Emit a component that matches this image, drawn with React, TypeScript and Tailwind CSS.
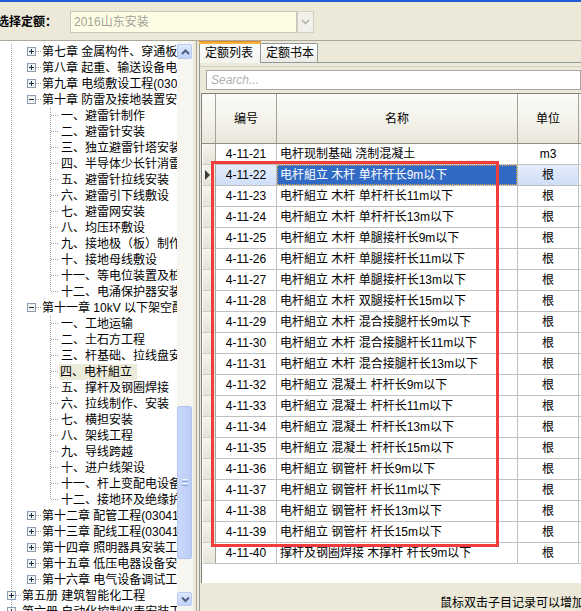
import React from "react";

type TreeItem = { t: string; lv: 0 | 1 | 2; box?: "+" | "-"; sel?: boolean; last?: boolean };

const tree: TreeItem[] = [
  { t: "第七章 金属构件、穿通板、接地", lv: 1, box: "+" },
  { t: "第八章 起重、输送设备电气", lv: 1, box: "+" },
  { t: "第九章 电缆敷设工程(030408)", lv: 1, box: "+" },
  { t: "第十章 防雷及接地装置安装", lv: 1, box: "-" },
  { t: "一、避雷针制作", lv: 2 },
  { t: "二、避雷针安装", lv: 2 },
  { t: "三、独立避雷针塔安装", lv: 2 },
  { t: "四、半导体少长针消雷装置", lv: 2 },
  { t: "五、避雷针拉线安装", lv: 2 },
  { t: "六、避雷引下线敷设", lv: 2 },
  { t: "七、避雷网安装", lv: 2 },
  { t: "八、均压环敷设", lv: 2 },
  { t: "九、接地极（板）制作", lv: 2 },
  { t: "十、接地母线敷设", lv: 2 },
  { t: "十一、等电位装置及桩", lv: 2 },
  { t: "十二、电涌保护器安装", lv: 2, last: true },
  { t: "第十一章 10kV 以下架空配电", lv: 1, box: "-" },
  { t: "一、工地运输", lv: 2 },
  { t: "二、土石方工程", lv: 2 },
  { t: "三、杆基础、拉线盘安装", lv: 2 },
  { t: "四、电杆組立", lv: 2, sel: true },
  { t: "五、撑杆及钢圈焊接", lv: 2 },
  { t: "六、拉线制作、安装", lv: 2 },
  { t: "七、横担安装", lv: 2 },
  { t: "八、架线工程", lv: 2 },
  { t: "九、导线跨越", lv: 2 },
  { t: "十、进户线架设", lv: 2 },
  { t: "十一、杆上变配电设备", lv: 2 },
  { t: "十二、接地环及绝缘护罩", lv: 2, last: true },
  { t: "第十二章 配管工程(030411)", lv: 1, box: "+" },
  { t: "第十三章 配线工程(030411)", lv: 1, box: "+" },
  { t: "第十四章 照明器具安装工程", lv: 1, box: "+" },
  { t: "第十五章 低压电器设备安装", lv: 1, box: "+" },
  { t: "第十六章 电气设备调试工程", lv: 1, box: "+" },
  { t: "第五册 建筑智能化工程", lv: 0, box: "+" },
  { t: "第六册 自动化控制仪表安装工程", lv: 0, box: "+" },
];

const rows: [string, string, string][] = [
  ["4-11-21", "电杆现制基础 浇制混凝土", "m3"],
  ["4-11-22", "电杆組立 木杆 单杆杆长9m以下", "根"],
  ["4-11-23", "电杆組立 木杆 单杆杆长11m以下", "根"],
  ["4-11-24", "电杆組立 木杆 单杆杆长13m以下", "根"],
  ["4-11-25", "电杆組立 木杆 单腿接杆长9m以下", "根"],
  ["4-11-26", "电杆組立 木杆 单腿接杆长11m以下", "根"],
  ["4-11-27", "电杆組立 木杆 单腿接杆长13m以下", "根"],
  ["4-11-28", "电杆組立 木杆 双腿接杆长15m以下", "根"],
  ["4-11-29", "电杆組立 木杆 混合接腿杆长9m以下", "根"],
  ["4-11-30", "电杆組立 木杆 混合接腿杆长11m以下", "根"],
  ["4-11-31", "电杆組立 木杆 混合接腿杆长13m以下", "根"],
  ["4-11-32", "电杆組立 混凝土 杆杆长9m以下", "根"],
  ["4-11-33", "电杆組立 混凝土 杆杆长11m以下", "根"],
  ["4-11-34", "电杆組立 混凝土 杆杆长13m以下", "根"],
  ["4-11-35", "电杆組立 混凝土 杆杆长15m以下", "根"],
  ["4-11-36", "电杆組立 钢管杆 杆长9m以下", "根"],
  ["4-11-37", "电杆組立 钢管杆 杆长11m以下", "根"],
  ["4-11-38", "电杆組立 钢管杆 杆长13m以下", "根"],
  ["4-11-39", "电杆組立 钢管杆 杆长15m以下", "根"],
  ["4-11-40", "撑杆及钢圈焊接 木撑杆 杆长9m以下", "根"],
];

const DOT = "#a0a0a0";

function Box({ x, kind }: { x: number; kind: "+" | "-" }) {
  const c = x + 4.5;
  return (
    <g>
      <rect x={x + 0.5} y={3.5} width={8} height={8} fill="#f3f3ef" stroke="#8a9eb6" />
      <line x1={c - 2.5} y1={7.5} x2={c + 2.5} y2={7.5} stroke="#1b2a4a" />
      {kind === "+" && <line x1={c} y1={5} x2={c} y2={10} stroke="#1b2a4a" />}
    </g>
  );
}

function TreeGlyph({ it }: { it: TreeItem }) {
  const w = it.lv === 0 ? 22 : it.lv === 1 ? 42 : 61;
  return (
    <svg width={w} height={16} className="shrink-0 block">
      <line x1={11.5} y1={0} x2={11.5} y2={16} stroke={DOT} strokeDasharray="1 1" />
      {it.lv === 0 && (
        <>
          <line x1={16} y1={7.5} x2={21} y2={7.5} stroke={DOT} strokeDasharray="1 1" />
          <Box x={7} kind={it.box!} />
        </>
      )}
      {it.lv === 1 && (
        <>
          <line x1={36} y1={7.5} x2={41} y2={7.5} stroke={DOT} strokeDasharray="1 1" />
          <Box x={27} kind={it.box!} />
        </>
      )}
      {it.lv === 2 && (
        <>
          <line x1={50.5} y1={0} x2={50.5} y2={it.last ? 8 : 16} stroke={DOT} strokeDasharray="1 1" />
          <line x1={51} y1={7.5} x2={59} y2={7.5} stroke={DOT} strokeDasharray="1 1" />
        </>
      )}
    </svg>
  );
}

function Chevron({ up }: { up: boolean }) {
  return (
    <svg width={15} height={14} className="block">
      <path
        d={up ? "M4 9 L7.5 5.5 L11 9" : "M4 5.5 L7.5 9 L11 5.5"}
        fill="none"
        stroke="#4d6185"
        strokeWidth={2}
      />
    </svg>
  );
}

export default function App() {
  return (
    <div
      className="relative w-[581px] h-[611px] overflow-hidden bg-[#ece9d8] text-[12px] text-black"
      style={{ fontFamily: '"Liberation Sans", "Noto Sans CJK SC", sans-serif' }}
    >
      <div className="h-[2px] bg-[#1e5ed8]" />
      {/* top selector row */}
      <div className="h-[38px] flex items-start pt-[9px]">
        <div className="-ml-[3px] w-[73px] h-[22px] flex items-center font-bold text-[12px] leading-[14px] whitespace-nowrap">
          选择定额：
        </div>
        <div className="w-[227px] h-[22px] border border-[#c9c7ba] bg-[#fdfde6] flex items-center pl-[3px] text-[#a5a395] leading-[14px]">
          2016山东安装
        </div>
        <div className="w-[17px] h-[22px] border border-[#d2d0c5] bg-[#f1f0ea] flex items-center justify-center">
          <svg width={9} height={6}>
            <path d="M1 1 L4.5 4.5 L8 1" fill="none" stroke="#b4b3aa" strokeWidth={1.6} />
          </svg>
        </div>
      </div>
      <div className="h-px bg-[#aca899]" />

      <div className="flex h-[570px]">
        {/* left tree panel */}
        <div className="w-[193px] flex bg-white">
          <div className="w-[177px] overflow-hidden pt-[3px]">
            {tree.map((it, i) => (
              <div key={i} className="h-[16px] flex items-center whitespace-nowrap leading-[16px]">
                <TreeGlyph it={it} />
                <span
                  className={
                    it.sel
                      ? "bg-[#ecead9] pl-[1px] pr-[5px] -ml-[2px]"
                      : it.lv === 2
                      ? ""
                      : ""
                  }
                >
                  {it.t}
                </span>
              </div>
            ))}
          </div>
          {/* scrollbar */}
          <div className="w-[16px] bg-[#f6f5f0] flex flex-col pt-[3px]">
            <div className="h-[15px] w-[15px] rounded-[2px] border border-[#b9cbf3] bg-linear-to-b from-[#dfe8fd] to-[#c1d2f8] flex items-center justify-center">
              <Chevron up />
            </div>
            <div className="h-[347px]" />
            <div className="h-[153px] w-[15px] rounded-[2px] border border-[#b1c4f2] bg-linear-to-r from-[#c9d8fc] to-[#bccdf6] flex items-center justify-center">
              <div className="flex flex-col gap-[1px]">
                <div className="w-[6px] h-px bg-[#eef3ff]" />
                <div className="w-[6px] h-px bg-[#8ea6dc]" />
                <div className="w-[6px] h-px bg-[#eef3ff]" />
                <div className="w-[6px] h-px bg-[#8ea6dc]" />
              </div>
            </div>
            <div className="h-[33px]" />
            <div className="h-[14px] w-[15px] rounded-[2px] border border-[#b9cbf3] bg-linear-to-b from-[#dfe8fd] to-[#c1d2f8] flex items-center justify-center">
              <Chevron up={false} />
            </div>
          </div>
        </div>

        {/* splitter */}
        <div className="w-[6px] flex pl-[3px]">
          <div className="w-px bg-[#a8a595]" />
        </div>

        {/* right panel */}
        <div className="flex-1 flex flex-col min-w-0">
          {/* tabs */}
          <div className="h-[21px] flex items-end relative z-10">
            <div className="w-[62px] h-[22px] -mb-px border-x border-[#919b9c] bg-linear-to-b from-[#fcfcfe] to-[#f4f3ee] flex flex-col">
              <div className="h-[3px] bg-[#f6b13d] border-t border-[#e68b2c] -mx-px" />
              <div className="flex-1 pl-[5px] leading-[18px]">定额列表</div>
            </div>
            <div className="w-[57px] h-[19px] border-t border-r border-[#919b9c] rounded-tr-[2px] bg-linear-to-b from-[#ffffff] to-[#ecebe5] pl-[5px] leading-[18px]">
              定额书本
            </div>
          </div>
          {/* body */}
          <div className="flex-1 flex flex-col border-t border-l border-[#919b9c] min-h-0">
            <div className="h-[3px]" />
            <div className="h-px bg-[#d3cfbf]" />
            <div className="h-[3px]" />
            <div className="ml-[6px] h-[20px] border border-[#a7a69c] bg-white flex items-center pl-[4px] italic text-[#b0b0b0] text-[12px]">
              Search...
            </div>
            <div className="h-[3px]" />
            {/* grid */}
            <div className="ml-[1px] h-[490px] bg-white border-l border-t border-[#7f7f7f] flex flex-col overflow-hidden">
              {/* header */}
              <div className="h-[50px] flex border-b border-[#8f8e86] bg-linear-to-b from-[#fbfbf8] via-[#f4f3ec] to-[#e8e6da] shrink-0">
                <div className="w-[14px] border-r border-[#a4a39a] shrink-0" />
                <div className="w-[61px] border-r border-[#a4a39a] flex items-center justify-center shrink-0">编号</div>
                <div className="w-[241px] border-r border-[#a4a39a] flex items-center justify-center shrink-0">名称</div>
                <div className="w-[61px] border-r border-[#a4a39a] flex items-center justify-center shrink-0">单位</div>
                <div className="flex-1" />
              </div>
              {rows.map((r, i) => {
                const sel = i === 1;
                return (
                  <div key={r[0]} className="h-[21px] flex shrink-0 leading-[20px]">
                    <div className="w-[14px] border-r border-b border-r-[#a4a39a] border-b-[#d0cec2] border-l border-l-white bg-linear-to-b from-[#f5f4ee] to-[#e6e4d7] shrink-0 flex items-center">
                      {sel && (
                        <svg width={8} height={10} className="ml-[1px]">
                          <path d="M1 0 L6 5 L1 10 Z" fill="#3c3c3c" />
                        </svg>
                      )}
                    </div>
                    <div
                      className={`w-[61px] border-r border-b border-[#c0c0c0] text-center shrink-0 ${
                        sel ? "bg-linear-to-b from-[#e4edfc] to-[#cfdff8]" : ""
                      }`}
                    >
                      {r[0]}
                    </div>
                    <div className="w-[241px] border-r border-b border-[#c0c0c0] shrink-0 whitespace-nowrap overflow-hidden">
                      {sel ? (
                        <div className="h-[20px] bg-[#316ac5] text-white border border-dotted border-[#d9a54a] pl-[2px] leading-[18px]">
                          {r[1]}
                        </div>
                      ) : (
                        <div className="pl-[3px]">{r[1]}</div>
                      )}
                    </div>
                    <div
                      className={`w-[61px] border-r border-b border-[#c0c0c0] text-center shrink-0 ${
                        sel ? "bg-linear-to-b from-[#e4edfc] to-[#cfdff8]" : ""
                      }`}
                    >
                      {r[2]}
                    </div>
                    <div className="flex-1 border-b border-[#c0c0c0]" />
                  </div>
                );
              })}
            </div>
            {/* status */}
            <div className="flex-1 pl-[240px] pt-[13px] whitespace-nowrap overflow-hidden leading-[14px]">
              鼠标双击子目记录可以增加子目
            </div>
          </div>
        </div>
      </div>

      {/* red highlight annotation */}
      <div className="absolute left-[211px] top-[161px] w-[288px] h-[386px] border-[3px] border-[#f03c3c] pointer-events-none" />
    </div>
  );
}
